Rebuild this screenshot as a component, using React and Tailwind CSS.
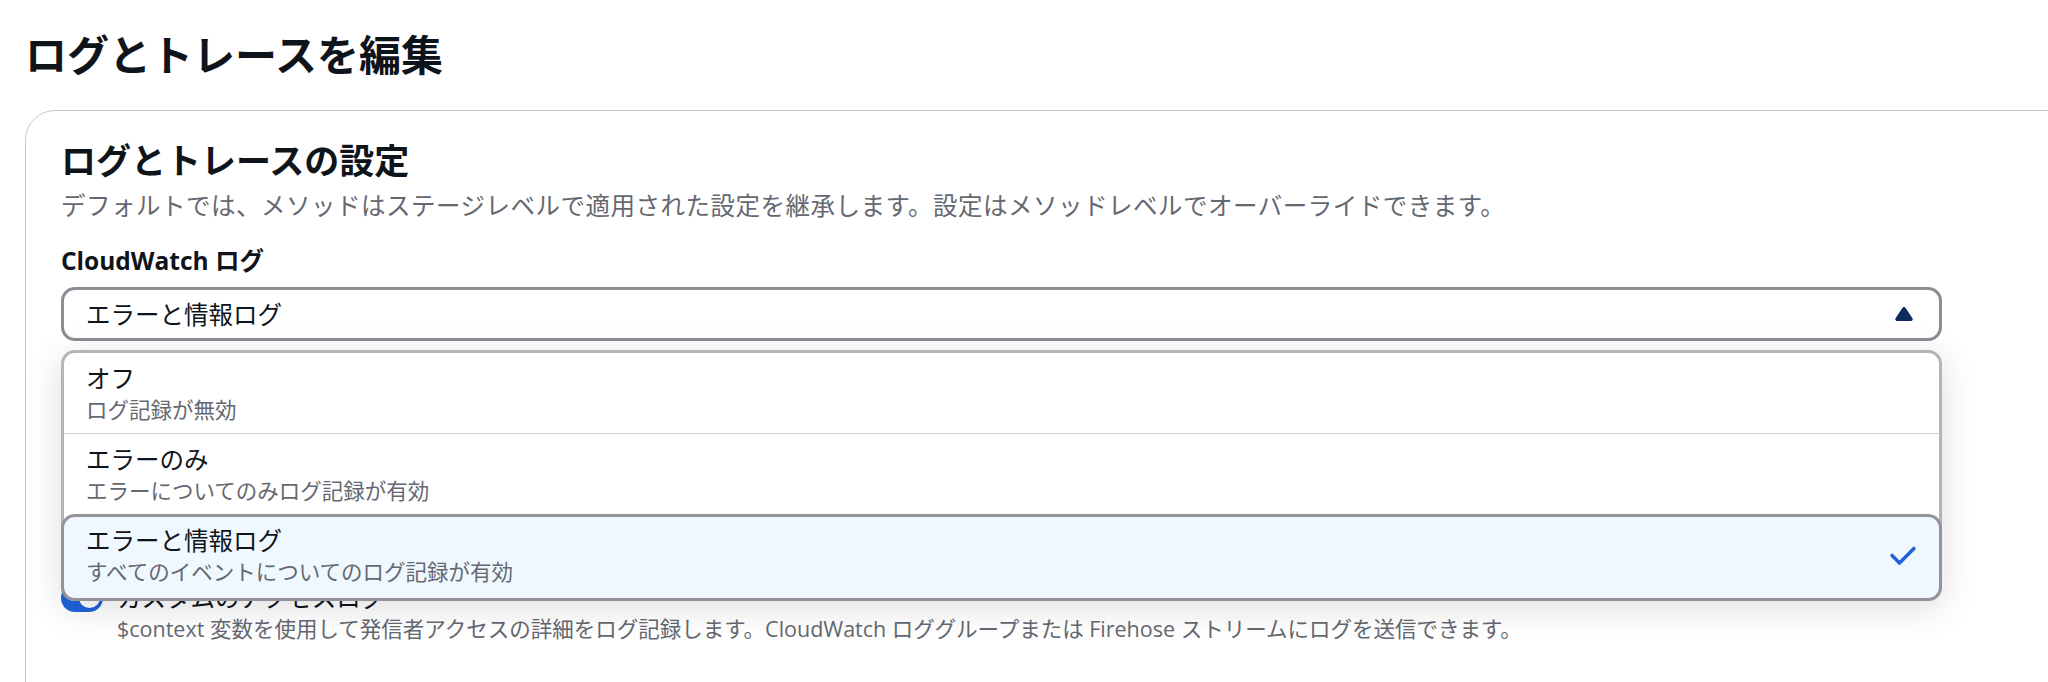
import React from 'react';

const options = [
  { label: 'オフ', description: 'ログ記録が無効' },
  { label: 'エラーのみ', description: 'エラーについてのみログ記録が有効' },
  { label: 'エラーと情報ログ', description: 'すべてのイベントについてのログ記録が有効', selected: true },
];

function CaretUp() {
  return (
    <svg viewBox="0 0 16 16" className="w-[28px] h-[28px] shrink-0" aria-hidden="true">
      <path d="M4 11h8L8 5l-4 6z" fill="#0f2a5c" stroke="#0f2a5c" strokeWidth="2" strokeLinejoin="round" />
    </svg>
  );
}

function Check() {
  return (
    <svg viewBox="0 0 16 16" className="w-[28px] h-[28px] shrink-0" aria-hidden="true">
      <polyline points="14.254 4.254 6 12.508 1.746 8.254" fill="none" stroke="#2160d8" strokeWidth="2" strokeLinecap="round" strokeLinejoin="round" />
    </svg>
  );
}

function Toggle({ on }) {
  return (
    <span className={`relative shrink-0 w-[42px] h-[28px] rounded-full ${on ? 'bg-[#1f63d9]' : 'bg-[#8c8c94]'}`}>
      <span className={`absolute top-[3.5px] w-[21px] h-[21px] rounded-full bg-white ${on ? 'right-[3.5px]' : 'left-[3.5px]'}`} />
    </span>
  );
}

function Option({ label, description, selected, last }) {
  if (selected) {
    return (
      <div className="-mx-[3px] -mb-[3px] flex items-center justify-between border-[3px] border-[#939399] rounded-[14px] bg-[#f0f8ff] pl-[22px] pr-[22px] pt-[6px] pb-[12px]">
        <div>
          <div className="text-[24.5px] leading-[35px] text-[#0f141a]">{label}</div>
          <div className="text-[21.5px] leading-[28px] text-[#656871]">{description}</div>
        </div>
        <Check />
      </div>
    );
  }
  return (
    <div className={`pl-[22px] pr-[22px] pt-[8px] pb-[9px] ${last ? '' : 'border-b-[1.5px] border-[#d1d1d6]'}`}>
      <div className="text-[24.5px] leading-[35px] text-[#0f141a]">{label}</div>
      <div className="text-[21.5px] leading-[28px] text-[#656871]">{description}</div>
    </div>
  );
}

export default function App() {
  return (
    <div className="w-[2048px] h-[682px] overflow-hidden bg-white px-[25px] pt-[29px] font-['Open_Sans','Noto_Sans_CJK_JP',sans-serif]">
      <h1 className="text-[42px] leading-[52px] font-bold text-[#0f141a]">ログとトレースを編集</h1>

      <div className="mt-[29px] w-[2100px] border-[1.75px] border-[#c6c6cd] rounded-[30px] px-[35px] pt-[29px] pb-[120px]">
        <h2 className="text-[35px] leading-[42px] font-bold text-[#0f141a]">ログとトレースの設定</h2>
        <p className="mt-[6px] text-[24.5px] leading-[35px] tracking-[0.5px] text-[#656871]">
          デフォルトでは、メソッドはステージレベルで適用された設定を継承します。設定はメソッドレベルでオーバーライドできます。
        </p>

        <label className="block mt-[20px] text-[24.5px] leading-[35px] font-bold text-[#0f141a]">CloudWatch ログ</label>

        <div className="relative mt-[9px] w-[1881px]">
          <button className="w-full h-[54px] flex items-center justify-between border-[3px] border-[#8c8c94] rounded-[14px] bg-white pl-[22px] pr-[21px] text-left">
            <span className="text-[24.5px] leading-[35px] text-[#0f141a]">エラーと情報ログ</span>
            <CaretUp />
          </button>

          <div className="absolute z-10 left-0 right-0 top-[63px] border-[3px] border-[#b4b4bb] rounded-[14px] bg-white shadow-[0_7px_35px_2px_rgba(0,7,22,0.12)]">
            {options.map((o, i) => (
              <Option key={o.label} {...o} last={i === 1} />
            ))}
          </div>
        </div>

        <div className="mt-[239px] flex flex-col">
          <div className="flex items-center gap-[14px] h-[35px]">
            <Toggle on />
            <span className="text-[24.5px] leading-[35px] text-[#0f141a]">カスタムのアクセスログ</span>
          </div>
          <p className="pl-[56px] text-[21.5px] leading-[28px] text-[#656871]">
            $context 変数を使用して発信者アクセスの詳細をログ記録します。CloudWatch ロググループまたは Firehose ストリームにログを送信できます。
          </p>
        </div>
      </div>
    </div>
  );
}
